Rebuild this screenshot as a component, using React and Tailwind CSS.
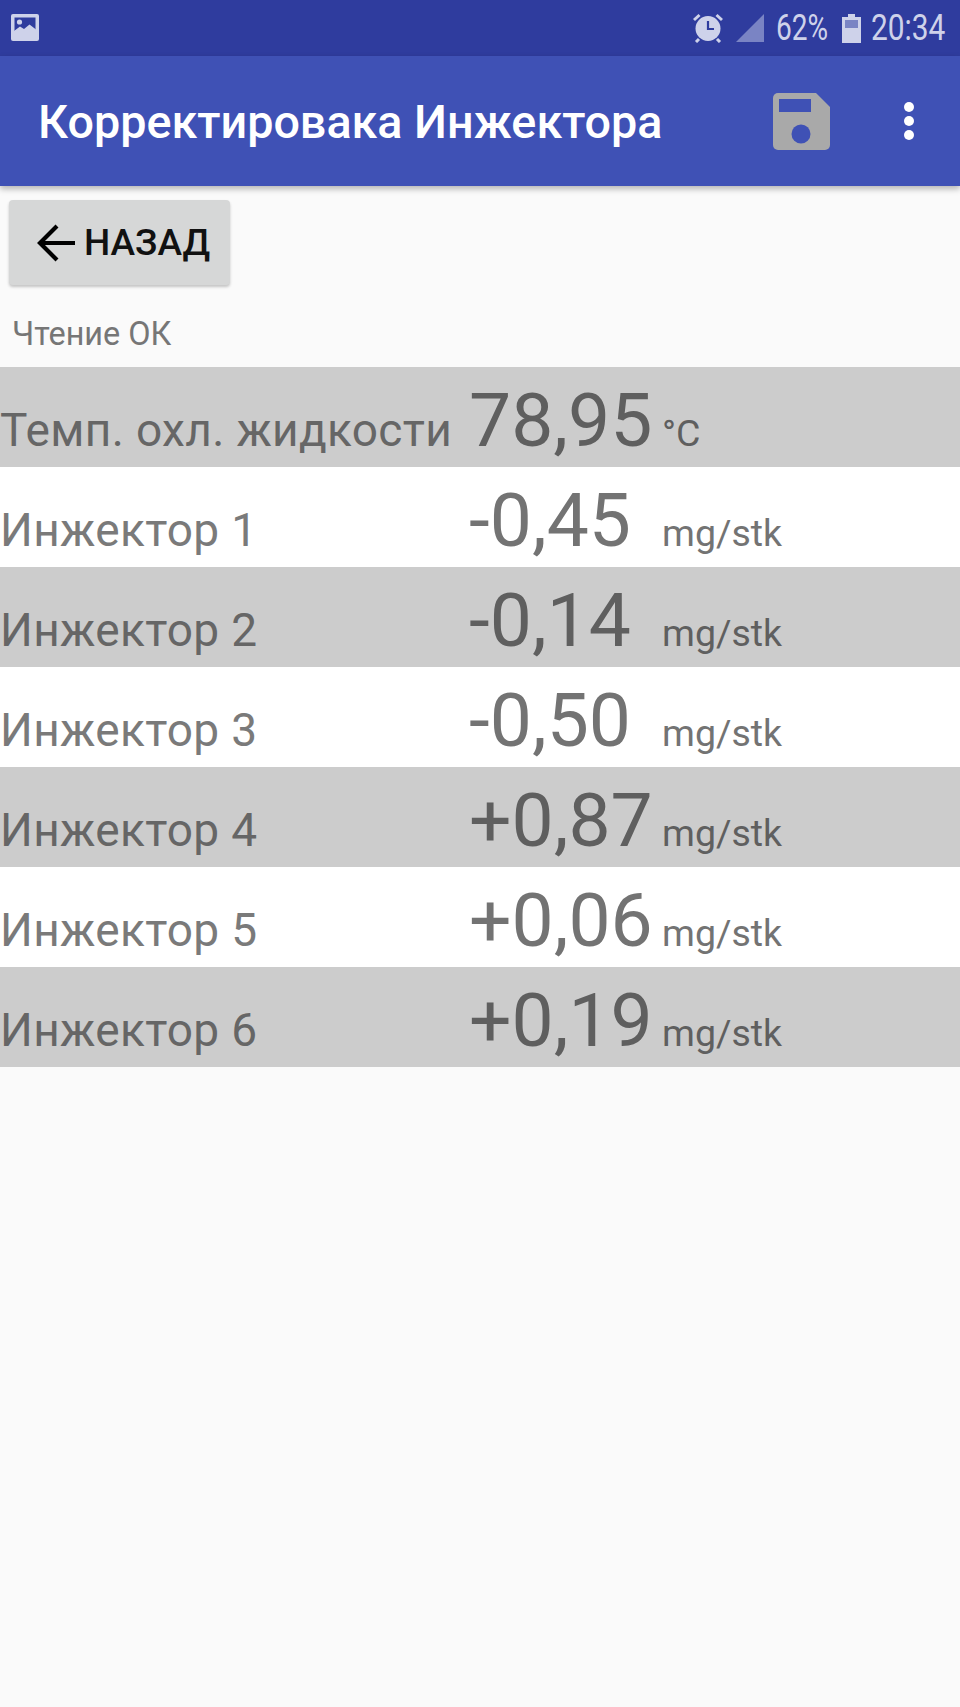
const rows = [
  ["Темп. охл. жидкости", "78,95", "°C", true],
  ["Инжектор 1", "-0,45", "mg/stk", false],
  ["Инжектор 2", "-0,14", "mg/stk", true],
  ["Инжектор 3", "-0,50", "mg/stk", false],
  ["Инжектор 4", "+0,87", "mg/stk", true],
  ["Инжектор 5", "+0,06", "mg/stk", false],
  ["Инжектор 6", "+0,19", "mg/stk", true],
];

function Row({ label, value, unit, shaded }) {
  const tone = shaded ? "text-[#5f5f5f]" : "text-[#737373]";
  const labelTone = shaded ? "text-[#666666]" : "text-[#7a7a7a]";
  return (
    <div className={`flex h-[100px] items-end ${shaded ? "bg-[#cccccc]" : "bg-white"}`}>
      <div className={`w-[469px] shrink-0 pb-[7px] text-[46px] leading-[60px] tracking-[0.35px] ${labelTone}`}>{label}</div>
      <div className={`w-[193px] shrink-0 pb-[3px] text-[75px] leading-[88px] ${tone}`}>{value}</div>
      <div className={`pb-[10px] text-[37.5px] leading-[48px] ${tone}`}>{unit}</div>
    </div>
  );
}

export default function App() {
  return (
    <div className="flex h-[1707px] w-[960px] flex-col overflow-hidden bg-[#fafafa] font-['Roboto',sans-serif]">
      <div className="flex h-[56px] items-center justify-between bg-[#2f3c9e] pl-[11px] pr-[14px]">
        <svg width="28" height="28" viewBox="0 0 28 28">
          <rect x="0" y="0" width="28" height="27" rx="2" fill="#ced2ea" />
          <rect x="3.5" y="3.5" width="21" height="15" fill="#2f3c9e" />
          <circle cx="8.5" cy="8" r="2.6" fill="#ced2ea" />
          <path d="M3 20 L3 17 L9 12.5 L13 15 L18.5 10.5 L25 15.5 L25 20 Z" fill="#ced2ea" />
        </svg>
        <div className="flex items-center text-[#ced2ea]">
          <svg width="30" height="30" viewBox="0 0 30 30">
            <circle cx="15" cy="15.5" r="12.5" fill="#ced2ea" />
            <path d="M15 8 V16 H21" fill="none" stroke="#2f3c9e" strokeWidth="2.2" />
            <path d="M1 7 L6.5 2 M29 7 L23.5 2 M6 26 L3 29 M24 26 L27 29" stroke="#ced2ea" strokeWidth="3" />
          </svg>
          <svg className="ml-[13px]" width="28" height="28" viewBox="0 0 28 28">
            <path d="M0 28 L28 0 V28 Z" fill="#7a84c4" />
          </svg>
          <span className="ml-[12px] w-[55px] origin-left whitespace-nowrap text-[36px] leading-none [transform:scaleX(0.78)]">62%</span>
          <svg className="ml-[11px]" width="19" height="29" viewBox="0 0 19 29">
            <path d="M6 0 H13 V3 H19 V29 H0 V3 H6 Z" fill="#ced2ea" />
            <rect x="3" y="6" width="13" height="8" fill="#7a84c4" />
          </svg>
          <span className="ml-[10px] w-[75px] origin-left whitespace-nowrap text-[36px] leading-none [transform:scaleX(0.83)]">20:34</span>
        </div>
      </div>

      <div className="relative z-10 flex h-[130px] items-center justify-between bg-[#3f51b5] pl-[38px] pr-[46px] shadow-[0_3px_6px_rgba(0,0,0,0.28)]">
        <h1 className="pt-[3px] text-[46.7px] font-medium leading-none text-white">Корректировака Инжектора</h1>
        <div className="flex items-center">
          <svg width="57" height="57" viewBox="0 0 57 57">
            <path d="M5 0 H43 L57 14 V52 A5 5 0 0 1 52 57 H5 A5 5 0 0 1 0 52 V5 A5 5 0 0 1 5 0 Z" fill="#a9a9a9" />
            <rect x="6" y="6" width="32" height="13" fill="#3f51b5" />
            <circle cx="28" cy="41" r="9.5" fill="#3f51b5" />
          </svg>
          <svg className="ml-[74px]" width="10" height="38" viewBox="0 0 10 38">
            <circle cx="5" cy="5" r="5" fill="#fff" />
            <circle cx="5" cy="19" r="5" fill="#fff" />
            <circle cx="5" cy="33" r="5" fill="#fff" />
          </svg>
        </div>
      </div>

      <div className="pl-[9px] pt-[14px]">
        <div className="flex h-[85px] w-[221px] items-center rounded-[4px] bg-[#d6d7d7] pl-[28px] shadow-[0_2px_3px_rgba(0,0,0,0.22)]">
          <svg width="38" height="38" viewBox="0 0 38 38">
            <path d="M38 19 H3 M20 2 L3 19 L20 36" fill="none" stroke="#000" strokeWidth="4.2" />
          </svg>
          <span className="ml-[9px] text-[37px] font-medium leading-none text-[#111]">НАЗАД</span>
        </div>
      </div>
      <div className="pl-[12px] pt-[30px] text-[32.4px] leading-[38px] text-[#767676]">Чтение ОК</div>
      <div className="mt-[14px]">
        {rows.map((r) => (
          <Row key={r[0]} label={r[0]} value={r[1]} unit={r[2]} shaded={r[3]} />
        ))}
      </div>
    </div>
  );
}
